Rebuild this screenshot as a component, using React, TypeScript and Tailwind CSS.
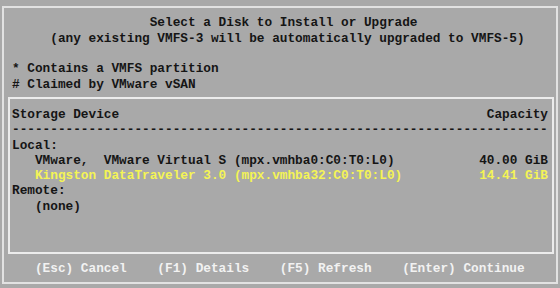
import React from "react";

const Line = ({ children, className = "" }: { children?: React.ReactNode; className?: string }) => (
  <div className={"h-[15.3px] leading-[15.3px] whitespace-pre " + className}>{children}</div>
);

export default function App() {
  return (
    <div
      className="w-[560px] h-[288px] bg-[#a9a9a9] overflow-hidden pt-[6px] px-[2px] text-[12.75px] font-bold text-[#151515] antialiased"
      style={{ fontFamily: '"Liberation Mono", "DejaVu Sans Mono", monospace' }}
    >
      <div className="h-[278px] border-2 border-[#e2e2e2] pt-[7.4px]">
        <div className="pl-[8px]">
          <Line>{"                  Select a Disk to Install or Upgrade"}</Line>
          <Line>{"     (any existing VMFS-3 will be automatically upgraded to VMFS-5)"}</Line>
          <Line> </Line>
          <Line>* Contains a VMFS partition</Line>
          <Line># Claimed by VMware vSAN</Line>
        </div>
        <div className="ml-[4px] mr-[2px] mt-[5.1px] h-[157px] border-2 border-[#ececec] pt-[8px] pl-[2px] pr-[4px]">
          <Line className="flex justify-between">
            <span>Storage Device</span>
            <span>Capacity</span>
          </Line>
          <Line>{"-".repeat(70)}</Line>
          <Line>Local:</Line>
          <Line className="flex justify-between">
            <span>{"   VMware,  VMware Virtual S (mpx.vmhba0:C0:T0:L0)"}</span>
            <span>40.00 GiB</span>
          </Line>
          <Line className="flex justify-between text-[#f4f455]">
            <span>{"   Kingston DataTraveler 3.0 (mpx.vmhba32:C0:T0:L0)"}</span>
            <span>14.41 GiB</span>
          </Line>
          <Line>Remote:</Line>
          <Line>{"   (none)"}</Line>
        </div>
        <div className="pl-[8px] mt-[6.8px] text-[#f2f2f2]">
          <Line>{"   (Esc) Cancel    (F1) Details    (F5) Refresh    (Enter) Continue"}</Line>
        </div>
      </div>
    </div>
  );
}
